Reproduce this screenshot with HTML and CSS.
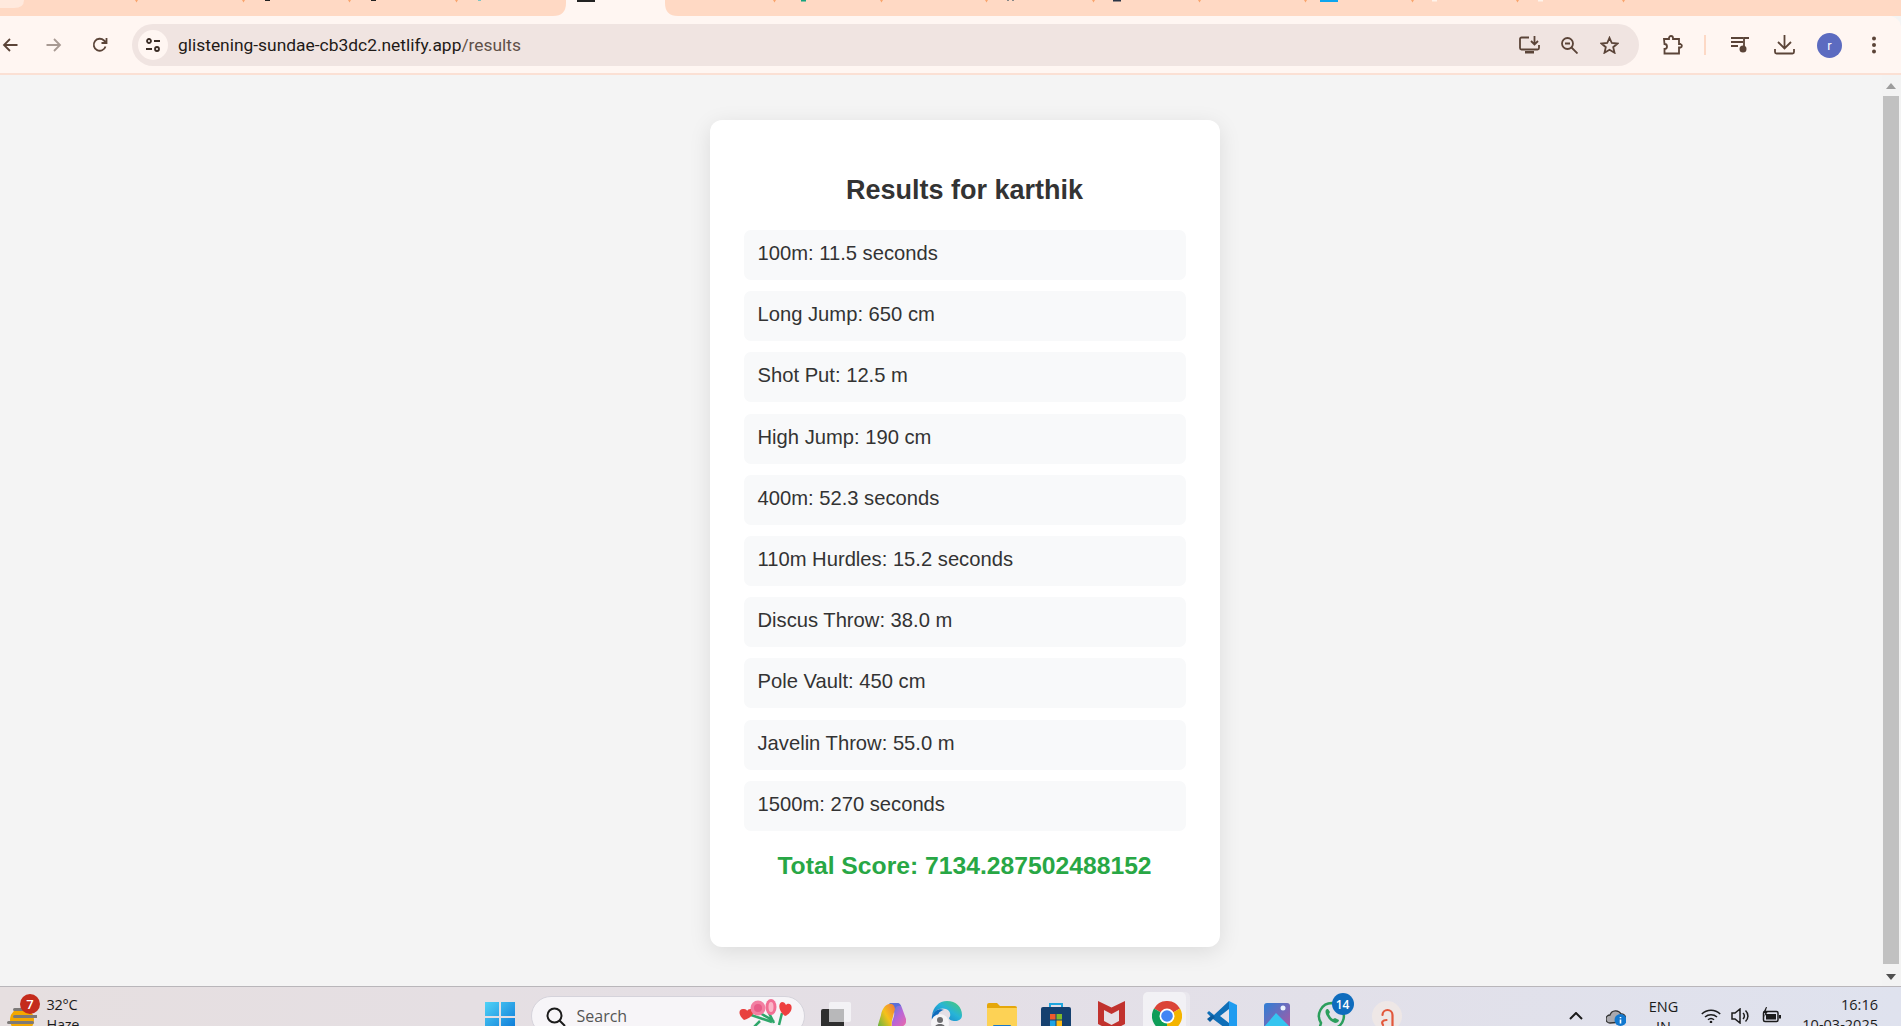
FILE: index.html
```html
<!DOCTYPE html>
<html lang="en">
<head>
<meta charset="utf-8">
<title>Results</title>
<link rel="stylesheet" href="styles.css">
</head>
<body>
<svg class="tabstrip" viewBox="0 0 1901 16" aria-hidden="true">
  <rect width="1901" height="16" fill="#fff6f2"/>
  <path d="M0 0H566V3Q566 16 553 16H0Z" fill="#ffd9c4"/>
  <path d="M665 0H1901V16H678Q665 16 665 3Z" fill="#ffd9c4"/>
  <path d="M0 0H24Q24 8 14 8H0Z" fill="#ffe9dd"/>
  <g fill="#f9a56e">
    <path d="M135 0h3l-1.500 2.500zM242 0h3l-1.500 2.500zM348 0h3l-1.500 2.500zM455 0h3l-1.500 2.500zM773 0h3l-1.500 2.500zM880 0h3l-1.500 2.500zM985 0h3l-1.500 2.500zM1092 0h3l-1.500 2.500zM1198 0h3l-1.500 2.500zM1304 0h3l-1.500 2.500zM1411 0h3l-1.500 2.500zM1516 0h3l-1.500 2.500zM1622 0h3l-1.500 2.500z"/>
  </g>
  <rect x="265" width="5" height="1" fill="#222"/>
  <rect x="371" width="5" height="1" fill="#222"/>
  <rect x="478" width="3" height="1" fill="#7fc4c4"/>
  <rect x="577" width="18" height="2" fill="#222"/>
  <rect x="801" width="5" height="1.500" fill="#14a37f"/>
  <rect x="1007" width="2" height="1" fill="#888"/>
  <rect x="1012" width="2" height="1" fill="#888"/>
  <rect x="1113" width="8" height="1.500" fill="#2b3546"/>
  <rect x="1320" width="18" height="2" fill="#0ea5ee"/>
  <rect x="1432" width="5" height="1.500" fill="#fff3ea"/>
  <rect x="1538" width="5" height="1.500" fill="#fff3ea"/>
</svg>

<header class="toolbar">
  <svg class="ic ic-back" viewBox="0 0 16 16"><path d="M15.500 8H2M8 2L2 8l6 6"/></svg>
  <svg class="ic ic-forward" viewBox="0 0 16 16"><path d="M.5 8H14M8 2l6 6-6 6"/></svg>
  <svg class="ic ic-reload" viewBox="0 0 16 16"><path d="M13.500 9.500A6 6 0 1 1 12 3.500L14 5.500M14.500 1v5h-5"/></svg>
  <div class="omnibox">
    <span class="tune">
      <svg class="ic ic-tune" viewBox="0 0 16 16"><circle cx="4" cy="4" r="2"/><path d="M9 4h6M1 12h6"/><circle cx="12" cy="12" r="2"/></svg>
    </span>
    <span class="url">glistening-sundae-cb3dc2.netlify.app<span class="url-path">/results</span></span>
    <svg class="ic ic-install" viewBox="0 0 21 18"><path d="M10 1.500H2.500a1.500 1.500 0 0 0-1.500 1.500v9a1.500 1.500 0 0 0 1.500 1.500h16a1.500 1.500 0 0 0 1.500-1.500V9"/><path d="M15.500 0v8M12 5l3.500 3.500L19 5"/><path class="solid" d="M6 15h9v2.500H6z"/></svg>
    <svg class="ic ic-zoom" viewBox="0 0 17 17"><circle cx="6.500" cy="6.500" r="5.500"/><path d="M4 6.500h5M10.500 10.500l6 6"/></svg>
    <svg class="ic ic-star" viewBox="0 0 19 18"><path d="M9.500 1.800l2.300 5.200 5.700.5-4.300 3.700 1.300 5.500-5-3-5 3 1.300-5.500L1.500 7.500 7.200 7z"/></svg>
  </div>
  <svg class="ic ic-puzzle" viewBox="0 0 20 20"><path d="M1 4h5V3a2 2 0 0 1 4 0v1h6v5h1.500a1.800 1.800 0 0 1 0 3.500H16v6H1.500v-4.500a2.500 2.500 0 0 0 0-5z"/></svg>
  <span class="divider"></span>
  <svg class="ic ic-music" viewBox="0 0 19 18"><path d="M0 2h12M0 6h12M0 10h7M13 13V2h5"/><circle class="solid" cx="12" cy="13" r="3.500"/></svg>
  <svg class="ic ic-download" viewBox="0 0 21 20"><path d="M10.500 0v13M4 7l6.500 6.500L17 7M1 14v3a1.500 1.500 0 0 0 1.500 1.500h16a1.500 1.500 0 0 0 1.500-1.500v-3"/></svg>
  <span class="avatar">r</span>
  <svg class="ic ic-dots" viewBox="0 0 6 18"><circle class="solid" cx="3" cy="2.500" r="2"/><circle class="solid" cx="3" cy="9" r="2"/><circle class="solid" cx="3" cy="15.500" r="2"/></svg>
</header>

<div class="viewport">
  <main class="page">
    <section class="card">
      <h1 class="title">Results for karthik</h1>
      <ul class="events">
        <li class="event">100m: 11.5 seconds</li>
        <li class="event">Long Jump: 650 cm</li>
        <li class="event">Shot Put: 12.5 m</li>
        <li class="event">High Jump: 190 cm</li>
        <li class="event">400m: 52.3 seconds</li>
        <li class="event">110m Hurdles: 15.2 seconds</li>
        <li class="event">Discus Throw: 38.0 m</li>
        <li class="event">Pole Vault: 450 cm</li>
        <li class="event">Javelin Throw: 55.0 m</li>
        <li class="event">1500m: 270 seconds</li>
      </ul>
      <p class="score">Total Score: 7134.287502488152</p>
    </section>
  </main>
  <div class="scrollbar">
    <span class="arrow arrow-up"></span>
    <span class="thumb"></span>
    <span class="arrow arrow-down"></span>
  </div>
</div>

<footer class="taskbar">
  <div class="weather">
    <svg class="weather-ic" viewBox="0 0 30 30">
      <circle cx="15" cy="16" r="12" fill="#f5a800"/>
      <g fill="#7d7a78"><rect x="6" y="4" width="22" height="3" rx="1.500"/><rect x="6" y="11" width="28" height="3" rx="1.500"/><rect x="0" y="17" width="27" height="3" rx="1.500"/></g>
    </svg>
    <span class="badge badge-red">7</span>
  </div>
  <div class="temp"><span>32°C</span><span>Haze</span></div>

  <svg class="tb i-win" viewBox="0 0 30 30">
    <defs><linearGradient id="wg" x1="0" y1="0" x2="1" y2="1"><stop offset="0" stop-color="#4fd3f7"/><stop offset="1" stop-color="#0a74d6"/></linearGradient></defs>
    <path fill="url(#wg)" d="M0 0h14v14H0zM16 0h14v14H16zM0 16h14v14H0zM16 16h14v14H16z"/>
  </svg>

  <div class="search">
    <svg class="search-ic" viewBox="0 0 20 20"><circle cx="8.500" cy="8.500" r="7"/><path d="M13.500 13.500l5.500 5.500"/></svg>
    <span class="search-text">Search</span>
    <svg class="flowers" viewBox="0 0 54 30">
      <path d="M10 15l24 8M20 13l16 9M30 12l6 12M44 14l-3 12M22 22l-6 6" stroke="#2ea66a" stroke-width="2.500" fill="none"/>
      <path d="M6 21C-1 15 1 9 6 10c2 0 3 1 3 2 1-2 5-3 6 0 1 4-3 7-9 9z" fill="#e8413f"/>
      <circle cx="20" cy="9" r="7.500" fill="#f27fa2"/><circle cx="20" cy="9" r="4" fill="#e85c88"/>
      <ellipse cx="33" cy="8" rx="5.500" ry="8" fill="#f26f94"/><ellipse cx="33" cy="8" rx="2.500" ry="5" fill="#fbb6c8"/>
      <path d="M47 17C40 12 40 4 44 3c2 0 3 1 4 3 1-1 3-2 5 0 2 4-1 9-6 11z" fill="#ee3f3f"/>
    </svg>
  </div>

  <svg class="tb i-task" viewBox="0 0 30 30">
    <rect x="0" y="7" width="23" height="23" rx="2" fill="#2f2f2f"/>
    <rect x="8" y="0" width="22" height="20" rx="2" fill="#f6f6f8" opacity=".85"/>
    <rect x="8" y="7" width="15" height="13" fill="#b8b8ba"/>
  </svg>

  <svg class="tb i-copilot" viewBox="0 0 28 30">
    <defs>
      <linearGradient id="c1" x1="0" y1="1" x2="1" y2="0"><stop offset="0" stop-color="#3fb04f"/><stop offset=".55" stop-color="#f5c21b"/><stop offset="1" stop-color="#f0763c"/></linearGradient>
      <linearGradient id="c2" x1="0" y1="0" x2="1" y2="1"><stop offset="0" stop-color="#2e8be0"/><stop offset=".55" stop-color="#b765d8"/><stop offset="1" stop-color="#ee6aa6"/></linearGradient>
    </defs>
    <path fill="url(#c2)" d="M11 0h8c3 0 4 2 5 5l4 11c1 4-2 8-6 8h-8c-1-5 1-7 2-11 1-5-1-10-5-13z"/>
    <path fill="url(#c1)" d="M11 1c3-1 6 0 6 5-1 3-2 8-3 11-1 6 0 10 2 13H7c-5 0-8-3-7-8l3-10c1-6 4-10 8-11z"/>
    <path fill="#5b6fd8" d="M12 0h7c2 0 3 1 4 3-3-1-5 0-6 3 0-3-2-5-5-6z"/>
  </svg>

  <svg class="tb i-edge" viewBox="0 0 31 30">
    <defs><linearGradient id="eg" x1="0" y1="1" x2="1" y2="0"><stop offset="0" stop-color="#1170c4"/><stop offset=".55" stop-color="#27b4d8"/><stop offset="1" stop-color="#4dcc68"/></linearGradient></defs>
    <path fill="url(#eg)" d="M16 0c9 0 15 6 15 14 0 4-3 6-7 6-3 0-6-1-6-3 2-2 2-7-3-9-6-2-12 2-14 7C2 6 8 0 16 0z"/>
    <path fill="#0f6cbd" d="M1 15c2-5 7-8 12-6-6 1-8 7-5 13 2 4 7 6 12 5-3 2-8 3-12 1-5-2-8-7-7-13z"/>
    <circle cx="9" cy="22" r="9" fill="#f5f4f6"/><circle cx="9" cy="19" r="3" fill="#6d6d70"/><path d="M3 28c1-4 3-5 6-5s5 1 6 5z" fill="#6d6d70"/>
  </svg>

  <svg class="tb i-folder" viewBox="0 0 30 30">
    <path d="M0 2a2 2 0 0 1 2-2h8l3 3h15a2 2 0 0 1 2 2v4H0z" fill="#e5a70a"/>
    <path d="M0 5h30v25H0z" fill="#fdd255"/>
    <rect x="6" y="22" width="18" height="8" rx="1" fill="#1a78c9"/>
  </svg>

  <svg class="tb i-store" viewBox="0 0 30 32">
    <path d="M9 6V2h12v4" fill="none" stroke="#1fa6de" stroke-width="2"/>
    <rect y="5" width="30" height="27" rx="2" fill="#15406f"/>
    <path d="M9 12h5.500v5.500H9z" fill="#ef5a2c"/><path d="M15.500 12H21v5.500h-5.500z" fill="#7fba2a"/><path d="M9 18.500h5.500V24H9z" fill="#1ea2e4"/><path d="M15.500 18.500H21V24h-5.500z" fill="#fdb813"/>
  </svg>

  <svg class="tb i-mcafee" viewBox="0 0 27 30">
    <path d="M0 0l13.500 6.500L27 0v23l-13.500 7L0 23z" fill="#c1322e"/>
    <path d="M6 9l7.500 4L21 9v11l-7.500 4L6 20z" fill="#e6e0e6"/>
  </svg>

  <div class="chrome-tile">
    <svg class="chrome" viewBox="0 0 30 30">
      <path d="M15 15L2 7.500A15 15 0 0 1 28 7.500z" fill="#db4437"/>
      <path d="M15 15L28 7.500A15 15 0 0 1 15 30z" fill="#f4b400"/>
      <path d="M15 15V30A15 15 0 0 1 2 7.500z" fill="#0f9d58"/>
      <circle cx="15" cy="15" r="7.500" fill="#fff"/><circle cx="15" cy="15" r="5.800" fill="#4285f4"/>
    </svg>
  </div>

  <svg class="tb i-code" viewBox="0 0 30 30">
    <path d="M22 0l8 4v22l-8 4-13-13 13-10z" fill="#1f9cf0"/>
    <path d="M22 0L7 14 2 10l-2 2 6 6 16 12z" fill="#0f6fb8"/>
    <path d="M22 8v14l-9-7z" fill="#e4e3ec"/>
    <path d="M0 18l3 3 5-5-3-2z" fill="#0a5c9e"/>
  </svg>

  <svg class="tb i-photos" viewBox="0 0 26 30">
    <defs><linearGradient id="pg" x1="0" y1="0" x2="1" y2="1"><stop offset="0" stop-color="#2d7fd6"/><stop offset="1" stop-color="#b5569f"/></linearGradient></defs>
    <rect width="26" height="30" rx="3" fill="url(#pg)"/>
    <circle cx="19" cy="5" r="2.500" fill="#eaf3ff"/>
    <path d="M0 24L12 10l14 14v6H0z" fill="#35c5f0"/>
  </svg>

  <div class="wa">
    <svg class="whatsapp" viewBox="0 0 30 30">
      <path d="M15 2a13 13 0 0 0-11 20L2 29l7-2A13 13 0 1 0 15 2z" fill="none" stroke="#2b9e5c" stroke-width="2.500"/>
      <path d="M10 8c-2 1-2 4 0 7 2 4 5 6 8 7 2 0 4-1 4-3l-4-2-2 1c-2-1-3-3-4-5l1-2-2-3z" fill="#2b9e5c"/>
    </svg>
    <span class="badge badge-blue">14</span>
  </div>

  <svg class="tb i-arc" viewBox="0 0 30 30">
    <circle cx="15" cy="15" r="15" fill="#eee7e6"/>
    <path d="M11 24c-2-3 0-5 3.500-5M20.500 25V14a5 5 0 0 0-10 0" fill="none" stroke="#e2573b" stroke-width="2.200" stroke-linecap="round"/>
  </svg>

  <svg class="tray-ic i-chevron" viewBox="0 0 14 8"><path d="M1 7l6-6 6 6"/></svg>
  <div class="cloud">
    <svg class="cloud-ic" viewBox="0 0 20 17"><path d="M4 14a4 4 0 0 1 0-8 6 6 0 0 1 11-1 4 4 0 0 1 1 8z" fill="#aaa9ae" stroke="#333" stroke-width="1.300"/><circle cx="14.500" cy="11" r="6" fill="#1278cf"/><path d="M14.500 8v1.200M14.500 10.500v4" stroke="#fff" stroke-width="1.600"/></svg>
  </div>
  <div class="lang"><span>ENG</span><span>IN</span></div>
  <svg class="tray-ic i-wifi" viewBox="0 0 20 14"><path d="M.8 5a13 13 0 0 1 18.400 0M4 8a9 9 0 0 1 12 0M7 10.800a4.500 4.500 0 0 1 6 0"/><circle class="solid" cx="10" cy="13" r="1.300"/></svg>
  <svg class="tray-ic i-speaker" viewBox="0 0 20 16"><path d="M1 5h3l5-4v14l-5-4H1zM12 5a4 4 0 0 1 0 6M14.500 2.500a7.500 7.500 0 0 1 0 11"/></svg>
  <svg class="tray-ic i-battery" viewBox="0 0 20 16"><rect x="2.500" y="4.500" width="14.500" height="10" rx="1.500"/><rect class="solid" x="5" y="7" width="10" height="5.500"/><path class="solid" d="M18 8h2v3.500h-2z"/><path class="solid tray-bolt" d="M5 0L2 6h2.200l-1 4 3.800-5.500H4.600L6 0z"/></svg>
  <div class="clock"><span>16:16</span><span>10-03-2025</span></div>
</footer>
</body>
</html>
```

FILE: styles.css
```css
* { box-sizing: border-box; }
html, body { margin: 0; height: 100%; }
body {
  display: flex;
  flex-direction: column;
  height: 100vh;
  overflow: hidden;
  background: #f4f4f4;
  font-family: "Liberation Sans", Arial, sans-serif;
}

.tabstrip { display: block; width: 100%; height: 16px; flex: none; }

/* toolbar */
.toolbar {
  flex: none;
  display: flex;
  align-items: center;
  height: 59px;
  padding: 1px 0 0 2px;
  background: #fff6f2;
  border-bottom: 2px solid #fbe0d4;
  border-top-right-radius: 12px;
}
.ic { flex: none; fill: none; stroke: #5b4438; stroke-width: 1.8; color: #5b4438; }
.ic .solid, .tray-ic .solid { fill: currentColor; stroke: none; }
.ic-back { width: 16px; height: 16px; }
.ic-forward { width: 16px; height: 16px; margin-left: 28px; stroke: #a89a93; }
.ic-reload { width: 16px; height: 16px; margin-left: 30px; }
.omnibox {
  flex: none;
  display: flex;
  align-items: center;
  width: 1507px;
  height: 42px;
  margin-left: 24px;
  padding-left: 6px;
  border-radius: 21px;
  background: #f0e4e1;
}
.tune {
  flex: none;
  display: flex;
  align-items: center;
  justify-content: center;
  width: 30px;
  height: 30px;
  border-radius: 50%;
  background: #fff6f2;
}
.ic-tune { width: 16px; height: 16px; stroke: #3a2c25; }
.url {
  flex: 1;
  margin-left: 10px;
  font-family: Roboto, sans-serif;
  font-size: 17.4px;
  color: #1f1a17;
  white-space: nowrap;
}
.url-path { color: #5f5048; }
.ic-install { width: 21px; height: 18px; }
.ic-zoom { width: 17px; height: 17px; margin-left: 21px; }
.ic-star { width: 19px; height: 18px; margin-left: 22px; margin-right: 20px; }
.ic-puzzle { width: 20px; height: 20px; margin-left: 24px; }
.divider { flex: none; width: 2px; height: 20px; margin-left: 21px; background: #fdd9c6; }
.ic-music { width: 19px; height: 18px; margin-left: 25px; }
.ic-download { width: 21px; height: 20px; margin-left: 24px; }
.avatar {
  flex: none;
  display: flex;
  align-items: center;
  justify-content: center;
  width: 25px;
  height: 25px;
  margin-left: 22px;
  border-radius: 50%;
  background: #5c6bc0;
  color: #fff;
  font-family: Roboto, sans-serif;
  font-size: 13px;
}
.ic-dots { width: 6px; height: 18px; margin-left: 29px; }

/* page */
.viewport { flex: 1; min-height: 0; display: flex; }
.page {
  flex: 1;
  min-width: 0;
  display: flex;
  justify-content: center;
  align-items: flex-start;
  padding: 45px 0 0 47px;
  overflow: hidden;
}
.card {
  width: 510px;
  height: 827px;
  padding: 54px 34px 0;
  border-radius: 12px;
  background: #fff;
  box-shadow: 0 5px 22px rgba(0, 0, 0, .1);
  color: #333;
}
.title {
  margin: 0 0 23px;
  font-size: 27px;
  line-height: 33px;
  font-weight: 700;
  text-align: center;
}
.events {
  display: flex;
  flex-direction: column;
  gap: 11.2px;
  margin: 0;
  padding: 0;
  list-style: none;
}
.event {
  height: 50px;
  padding: 0 14px;
  border-radius: 7px;
  background: #f8f9fa;
  font-size: 20.2px;
  line-height: 47px;
}
.score {
  margin: 20px 0 0;
  font-size: 24.7px;
  line-height: 30px;
  font-weight: 700;
  text-align: center;
  color: #28a745;
}

.scrollbar {
  flex: none;
  width: 19px;
  display: flex;
  flex-direction: column;
  align-items: center;
  padding: 8px 2px 6px 1px;
  background: #f3f3f3;
}
.thumb { flex: 1; width: 100%; margin: 7px 0 10px; background: #c1c1c1; }
.arrow { flex: none; width: 0; height: 0; border-left: 5px solid transparent; border-right: 5px solid transparent; }
.arrow-up { border-bottom: 6px solid #9d9d9d; }
.arrow-down { border-top: 6px solid #505050; }

/* taskbar */
.taskbar {
  flex: none;
  display: flex;
  align-items: flex-start;
  height: 40px;
  padding-left: 7px;
  overflow: hidden;
  border-top: 1px solid #b9b6ba;
  background: linear-gradient(90deg, #e6dfe0 0%, #e4dfe6 50%, #dfe2ee 100%);
  color: #1b1b1b;
  font-family: "Open Sans", sans-serif;
}
.tb { flex: none; display: block; }
.weather { flex: none; position: relative; width: 30px; height: 39px; }
.weather-ic { position: absolute; left: 0; top: 17px; width: 30px; height: 30px; }
.badge {
  position: absolute;
  display: flex;
  align-items: center;
  justify-content: center;
  border-radius: 50%;
  color: #fff;
  font-weight: 600;
}
.badge-red { left: 13px; top: 7px; width: 20px; height: 20px; background: #c42b1c; font-size: 13px; }
.badge-blue { left: 15px; top: 6px; width: 22px; height: 22px; background: #0f6cbd; font-size: 12px; }
.temp, .lang, .clock { flex: none; display: flex; flex-direction: column; font-size: 14.5px; line-height: 20px; white-space: nowrap; }
.temp { width: 40px; margin: 8px 0 0 9.5px; letter-spacing: -.3px; }
.i-win { width: 30px; height: 30px; margin: 15px 0 0 398px; }
.search {
  flex: none;
  display: flex;
  align-items: flex-start;
  width: 274px;
  height: 40px;
  margin: 9px 0 0 16px;
  padding: 10px 12px 0 14px;
  border-radius: 20px;
  border: 1px solid #d5d3db;
  background: #f7f5f8;
}
.search-ic { flex: none; width: 20px; height: 20px; fill: none; stroke: #1b1b1b; stroke-width: 2; }
.search-text { margin: -2px 0 0 11px; font-size: 16px; line-height: 22px; color: #555; }
.flowers { flex: none; width: 54px; height: 30px; margin: -8px 0 0 auto; }
.i-task { width: 30px; height: 30px; margin: 15px 0 0 16px; }
.i-copilot { width: 28px; height: 30px; margin: 16px 0 0 27px; }
.i-edge { width: 31px; height: 30px; margin: 14px 0 0 25px; }
.i-folder { width: 30px; height: 30px; margin: 16px 0 0 25px; }
.i-store { width: 30px; height: 32px; margin: 15px 0 0 24px; }
.i-mcafee { width: 27px; height: 30px; margin: 14px 0 0 27px; }
.chrome-tile {
  flex: none;
  width: 43px;
  height: 40px;
  margin: 5px 0 0 18px;
  padding: 9px 0 0 9px;
  border-radius: 5px 5px 0 0;
  background: rgba(255, 255, 255, .55);
  box-shadow: 4px 0 0 rgba(255, 255, 255, .25);
}
.chrome { display: block; width: 30px; height: 30px; }
.i-code { width: 30px; height: 30px; margin: 14px 0 0 21px; }
.i-photos { width: 26px; height: 30px; margin: 16px 0 0 27px; }
.wa { flex: none; position: relative; width: 30px; height: 39px; margin-left: 27px; }
.whatsapp { position: absolute; left: 0; top: 14px; width: 30px; height: 30px; }
.i-arc { width: 30px; height: 30px; margin: 14px 0 0 25px; }
.tray-ic { flex: none; display: block; fill: none; stroke: #1b1b1b; stroke-width: 1.500; color: #1b1b1b; }
.i-chevron { width: 14px; height: 8px; margin: 25px 0 0 167px; stroke-width: 2; }
.cloud { flex: none; margin: 22px 0 0 23px; }
.cloud-ic { display: block; width: 20px; height: 17px; }
.lang { width: 28px; margin: 10px 0 0 24px; align-items: center; }
.i-wifi { width: 20px; height: 14px; margin: 22px 0 0 23px; }
.i-speaker { width: 20px; height: 16px; margin: 21px 0 0 10px; }
.i-battery { width: 20px; height: 16px; margin: 20px 0 0 10px; }
.clock { margin: 8px 23px 0 auto; align-items: flex-end; }
```
